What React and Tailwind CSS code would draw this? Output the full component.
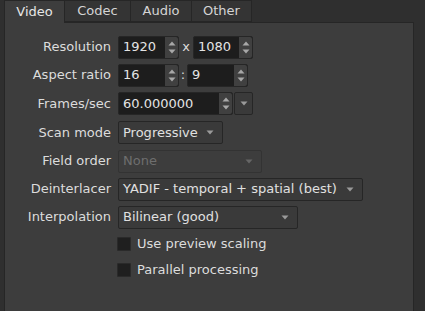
import React from "react";

const tabs = ["Video", "Codec", "Audio", "Other"];
const tabWidths = ["w-[60px]", "w-[66px]", "w-[61px]", "w-[61px]"];

function Down({ color = "#9a9a9a" }) {
  return (
    <svg width="8" height="5" viewBox="0 0 8 5">
      <path d="M0.5 0.5 L7.5 0.5 L4 4.5 Z" fill={color} />
    </svg>
  );
}

function Up({ color = "#a8a8a8" }) {
  return (
    <svg width="8" height="5" viewBox="0 0 8 5">
      <path d="M0.5 4.5 L7.5 4.5 L4 0.5 Z" fill={color} />
    </svg>
  );
}

function SpinBox({ value, className }) {
  return (
    <div className={`flex h-[23px] rounded-[2px] border border-[#262626] bg-[#1d1d1d] ${className}`}>
      <span className="flex flex-1 items-center pl-[4px] text-[#e4e4e4]">{value}</span>
      <div className="flex w-[13px] flex-col items-center justify-center gap-[3px] rounded-r-[2px] bg-[#404040]">
        <Up />
        <Down color="#a8a8a8" />
      </div>
    </div>
  );
}

function Combo({ value, className, disabled }) {
  return (
    <div
      className={`flex h-[23px] items-center justify-between rounded-[2px] border pl-[4px] pr-[8px] ${
        disabled ? "border-[#333333] bg-[#3d3d3d] text-[#6e6e6e]" : "border-[#262626] bg-[#3a3a3a] text-[#e0e0e0]"
      } ${className}`}
    >
      <span>{value}</span>
      <Down color={disabled ? "#666666" : "#9a9a9a"} />
    </div>
  );
}

function Row({ label, children, h }) {
  return (
    <div className={`grid grid-cols-[106px_1fr] items-center gap-x-[7px] ${h}`}>
      <span className="text-right">{label}</span>
      <div className="flex items-center">{children}</div>
    </div>
  );
}

function Check({ label, h }) {
  return (
    <div className={`flex items-center pl-[112px] ${h}`}>
      <span className="h-[14px] w-[14px] rounded-[1px] border border-[#2a2a2a] bg-[#1f1f1f]" />
      <span className="ml-[6px]">{label}</span>
    </div>
  );
}

export default function App() {
  return (
    <div className="h-[311px] w-[425px] overflow-hidden bg-[#2f2f2f] font-['DejaVu_Sans',sans-serif] text-[13px] text-[#dcdcdc]">
      <div className="relative z-10 -mb-px flex h-[23px] pl-[4px]">
        {tabs.map((tab, i) => (
          <div
            key={tab}
            className={`flex items-center justify-center border-l border-t border-[#262626] ${tabWidths[i]} ${
              i === 0 ? "h-[23px] bg-[#3d3d3d] text-[#e6e6e6]" : "h-[22px] border-b bg-[#343434] text-[#d4d4d4]"
            } ${i === tabs.length - 1 ? "border-r" : ""}`}
          >
            {tab}
          </div>
        ))}
      </div>
      <div className="ml-[4px] h-[300px] w-[410px] border border-[#262626] bg-[#3d3d3d] pt-[10px]">
        <Row label="Resolution" h="h-[28px]">
          <SpinBox value="1920" className="w-[61px]" />
          <span className="w-[14px] text-center">x</span>
          <SpinBox value="1080" className="w-[60px]" />
        </Row>
        <Row label="Aspect ratio" h="h-[28px]">
          <SpinBox value="16" className="w-[61px]" />
          <span className="w-[8px] text-center">:</span>
          <SpinBox value="9" className="w-[61px]" />
        </Row>
        <Row label="Frames/sec" h="h-[29px]">
          <SpinBox value="60.000000" className="w-[115px]" />
          <div className="ml-[1px] flex h-[23px] w-[19px] items-center justify-center rounded-[2px] border border-[#262626] bg-[#3a3a3a]">
            <Down />
          </div>
        </Row>
        <Row label="Scan mode" h="h-[29px]">
          <Combo value="Progressive" className="w-[105px]" />
        </Row>
        <Row label="Field order" h="h-[28px]">
          <Combo value="None" className="w-[144px]" disabled />
        </Row>
        <Row label="Deinterlacer" h="h-[28px]">
          <Combo value="YADIF - temporal + spatial (best)" className="w-[245px]" />
        </Row>
        <Row label="Interpolation" h="h-[28px]">
          <Combo value="Bilinear (good)" className="w-[180px]" />
        </Row>
        <Check label="Use preview scaling" h="h-[26px]" />
        <Check label="Parallel processing" h="h-[26px]" />
      </div>
    </div>
  );
}
